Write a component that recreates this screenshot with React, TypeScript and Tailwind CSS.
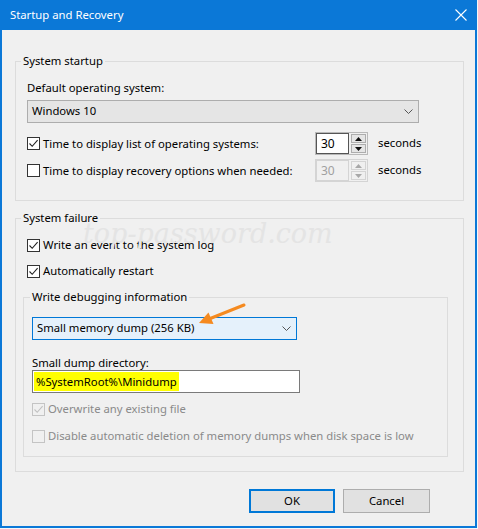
import clsx from "clsx";

const font = { fontFamily: '"Noto Sans", "Open Sans", sans-serif' };

function Check({ checked, disabled }: { checked?: boolean; disabled?: boolean }) {
  return (
    <span
      className={clsx(
        "flex h-[13px] w-[13px] shrink-0 items-center justify-center border",
        disabled ? "border-[#c4c4c4] bg-[#f0f0f0]" : "border-[#333] bg-white"
      )}
    >
      {checked && (
        <svg width="11" height="11" viewBox="0 0 11 11">
          <path
            d="M1.5 5.5 L4.2 8.3 L9.6 2.2"
            fill="none"
            stroke={disabled ? "#c0c0c0" : "#222"}
            strokeWidth="1.1"
          />
        </svg>
      )}
    </span>
  );
}

function CheckRow({ label, checked, disabled }: { label: string; checked?: boolean; disabled?: boolean }) {
  return (
    <div className="flex h-[16px] items-center gap-[3px]">
      <Check checked={checked} disabled={disabled} />
      <span className={clsx("leading-[16px]", disabled ? "text-[#8a8a8a]" : "text-black")}>{label}</span>
    </div>
  );
}

function Chevron() {
  return (
    <svg width="9" height="5" viewBox="0 0 9 5">
      <path d="M0.5 0.5 L4.5 4.5 L8.5 0.5" fill="none" stroke="#555" strokeWidth="1" />
    </svg>
  );
}

function Spin({ disabled }: { disabled?: boolean }) {
  const tri = disabled ? "#a8a8a8" : "#111";
  return (
    <div className={clsx("flex h-[23px] w-[53px] border", disabled ? "border-[#d4d4d4]" : "border-[#b9b9b9]")}>
      <div
        className={clsx(
          "w-[33px] border px-[4px] text-[12px] leading-[19px]",
          disabled ? "border-[#d4d4d4] bg-[#f0f0f0] text-[#a0a0a0]" : "border-[#555] bg-white text-black"
        )}
      >
        30
      </div>
      <div className="ml-[2px] flex w-[15px] flex-col gap-[1px] py-[1px]">
        <div
          className={clsx(
            "flex flex-1 items-center justify-center border",
            disabled ? "border-[#d4d4d4] bg-[#f0f0f0]" : "border-[#adadad] bg-[#e5e5e5]"
          )}
        >
          <svg width="7" height="4" viewBox="0 0 7 4">
            <path d="M0 4 L3.5 0 L7 4 Z" fill={tri} />
          </svg>
        </div>
        <div
          className={clsx(
            "flex flex-1 items-center justify-center border",
            disabled ? "border-[#d4d4d4] bg-[#f0f0f0]" : "border-[#adadad] bg-[#e5e5e5]"
          )}
        >
          <svg width="7" height="4" viewBox="0 0 7 4">
            <path d="M0 0 L3.5 4 L7 0 Z" fill={tri} />
          </svg>
        </div>
      </div>
    </div>
  );
}

export default function App() {
  return (
    <div className="h-[529px] w-[478px] bg-[#f4f6f9] text-[11.3px] text-black" style={font}>
      <div className="flex h-[528px] w-[477px] flex-col bg-[#0b78d7]">
        {/* title bar */}
        <div className="flex h-[30px] shrink-0 items-center justify-between pl-[10px] pr-[10px] text-white">
          <span className="leading-[16px]">Startup and Recovery</span>
          <svg width="12" height="12" viewBox="0 0 12 12">
            <path d="M0.5 0.5 L11.5 11.5 M11.5 0.5 L0.5 11.5" stroke="#fff" strokeWidth="1.1" />
          </svg>
        </div>

        <div className="relative mx-[2px] mb-[2px] flex flex-1 flex-col bg-[#f0f0f0] pl-[13px] pr-[11px] pt-[23px]">
          {/* System startup */}
          <fieldset className="border border-[#dcdcdc]">
            <legend className="ml-[5px] px-[2px] leading-[16px]">System startup</legend>
            <div className="flex flex-col pb-[18px] pl-[11px]">
              <div className="mt-[11px] leading-[16px]">Default operating system:</div>
              <div className="mt-[4px] flex h-[23px] w-[392px] items-center justify-between border border-[#adadad] bg-[#e5e5e5] pl-[4px] pr-[5px]">
                <span>Windows 10</span>
                <Chevron />
              </div>
              <div className="mt-[9px] flex h-[23px] items-center">
                <div className="w-[288px]">
                  <CheckRow label="Time to display list of operating systems:" checked />
                </div>
                <Spin />
                <span className="ml-[10px]">seconds</span>
              </div>
              <div className="mt-[4px] flex h-[23px] items-center">
                <div className="w-[288px]">
                  <CheckRow label="Time to display recovery options when needed:" />
                </div>
                <Spin disabled />
                <span className="ml-[10px]">seconds</span>
              </div>
            </div>
          </fieldset>

          {/* System failure */}
          <fieldset className="mt-[9px] border border-[#dcdcdc]">
            <legend className="ml-[5px] px-[2px] leading-[16px]">System failure</legend>
            <div className="flex flex-col pb-[14px] pl-[7px] pr-[15px]">
              <div className="mt-[11px] pl-[4px]">
                <CheckRow label="Write an event to the system log" checked />
              </div>
              <div className="mt-[10px] pl-[4px]">
                <CheckRow label="Automatically restart" checked />
              </div>

              <fieldset className="mt-[10px] border border-[#dcdcdc]">
                <legend className="ml-[6px] px-[2px] leading-[16px]">Write debugging information</legend>
                <div className="flex flex-col pb-[12px] pl-[8px]">
                  <div className="mt-[12px] flex h-[23px] w-[265px] items-center justify-between border border-[#0078d7] bg-[#e5f1fb] pl-[4px] pr-[5px]">
                    <span>Small memory dump (256 KB)</span>
                    <Chevron />
                  </div>
                  <div className="mt-[15px] leading-[15px]">Small dump directory:</div>
                  <div className="flex h-[23px] w-[268px] items-center border border-[#7a7a7a] bg-white pl-[1px]">
                    <span className="bg-[#ffff00] px-[2px] leading-[19px]">%SystemRoot%\Minidump</span>
                  </div>
                  <div className="mt-[8px]">
                    <CheckRow label="Overwrite any existing file" checked disabled />
                  </div>
                  <div className="mt-[11px]">
                    <CheckRow label="Disable automatic deletion of memory dumps when disk space is low" disabled />
                  </div>
                </div>
              </fieldset>
            </div>
          </fieldset>

          {/* buttons */}
          <div className="mt-[17px] flex justify-end gap-[8px] pr-[34px]">
            <button className="h-[24px] w-[86px] border-2 border-[#0078d7] bg-[#e1e1e1] leading-[20px]">OK</button>
            <button className="h-[24px] w-[87px] border border-[#adadad] bg-[#e1e1e1] leading-[22px]">Cancel</button>
          </div>

          {/* watermark */}
          <div
            className="pointer-events-none absolute left-[81px] top-[192px] text-[27px] italic leading-[24px] text-[#e4e4e4]"
            style={{ fontFamily: '"DejaVu Serif", serif' }}
          >
            top-password.com
          </div>

          {/* annotation arrow */}
          <svg className="pointer-events-none absolute left-[190px] top-[268px]" width="60" height="30" viewBox="0 0 60 30">
            <path d="M52 7 L17 21" stroke="#f58a1f" strokeWidth="3" strokeLinecap="round" />
            <path d="M7 25 L21.5 26 L16.5 14.5 Z" fill="#f58a1f" />
          </svg>
        </div>
      </div>
    </div>
  );
}
